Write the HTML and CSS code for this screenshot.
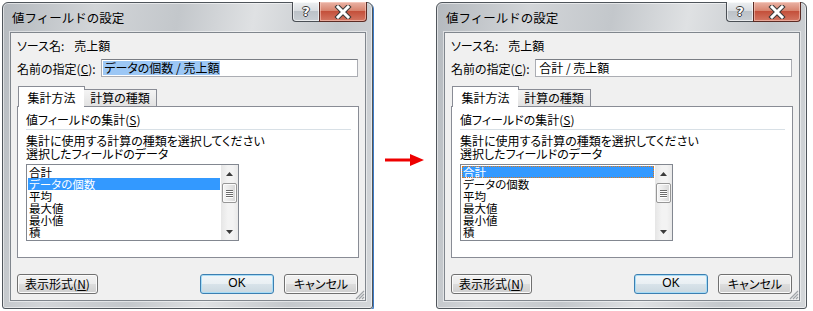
FILE: index.html
```html
<!DOCTYPE html>
<html lang="ja">
<head>
<meta charset="utf-8">
<title>値フィールドの設定</title>
<link rel="stylesheet" href="styles.css">
</head>
<body>
<div class="page">
  <div class="dialog left">
    <div class="titlebar">
      <span class="title">値フィールドの設定</span>
      <div class="caption">
        <span class="cap-help">?</span>
        <span class="cap-close"><svg width="20" height="14" viewBox="0 0 20 14"><path d="M5 2 L15 12 M15 2 L5 12" stroke="#3a3a3a" stroke-width="5" stroke-linecap="square"/><path d="M5 2 L15 12 M15 2 L5 12" stroke="#ffffff" stroke-width="3" stroke-linecap="square"/></svg></span>
      </div>
    </div>
    <div class="client">
      <div class="source">ソース名:<span class="val">売上額</span></div>
      <div class="namerow">
        <span class="label">名前の指定(<u>C</u>):</span>
        <div class="input"><span class="sel">データの個数 / 売上額</span></div>
      </div>
      <div class="tabs">
        <div class="tab active">集計方法</div>
        <div class="tab">計算の種類</div>
      </div>
      <div class="panel">
        <div class="group">値フィールドの集計(<u>S</u>)</div>
        <div class="sep"></div>
        <div class="desc">集計に使用する計算の種類を選択してください<br>選択したフィールドのデータ</div>
        <div class="listbox">
          <ul class="items">
            <li>合計</li>
            <li class="selected">データの個数</li>
            <li>平均</li>
            <li>最大値</li>
            <li>最小値</li>
            <li>積</li>
          </ul>
          <div class="scrollbar">
            <div class="sb-btn"><svg width="7" height="4" viewBox="0 0 7 4"><path d="M0 4 L3.5 0 L7 4Z" fill="#3b3b3b"/></svg></div>
            <div class="thumb"><span></span><span></span><span></span><span></span></div>
            <div class="sb-fill"></div>
            <div class="sb-btn"><svg width="7" height="4" viewBox="0 0 7 4"><path d="M0 0 L3.5 4 L7 0Z" fill="#3b3b3b"/></svg></div>
          </div>
        </div>
      </div>
      <div class="buttons">
        <div class="btn fmt">表示形式(<u>N</u>)</div>
        <div class="btn ok">OK</div>
        <div class="btn cancel">キャンセル</div>
      </div>
      <svg class="grip" width="11" height="11" viewBox="0 0 11 11"><path d="M10 2 L2 10 M10 5 L5 10 M10 8 L8 10" stroke="#a0a4a8" stroke-width="1.2"/></svg>
    </div>
  </div>

  <div class="arrow-gap">
    <svg class="arrow" width="40" height="12" viewBox="0 0 40 12"><path d="M0 6 H27" stroke="#ee0000" stroke-width="3"/><path d="M25 0 L39 6 L25 12 Z" fill="#ee0000"/></svg>
  </div>

  <div class="dialog right">
    <div class="titlebar">
      <span class="title">値フィールドの設定</span>
      <div class="caption">
        <span class="cap-help">?</span>
        <span class="cap-close"><svg width="20" height="14" viewBox="0 0 20 14"><path d="M5 2 L15 12 M15 2 L5 12" stroke="#3a3a3a" stroke-width="5" stroke-linecap="square"/><path d="M5 2 L15 12 M15 2 L5 12" stroke="#ffffff" stroke-width="3" stroke-linecap="square"/></svg></span>
      </div>
    </div>
    <div class="client">
      <div class="source">ソース名:<span class="val">売上額</span></div>
      <div class="namerow">
        <span class="label">名前の指定(<u>C</u>):</span>
        <div class="input"><span class="plain">合計 / 売上額</span></div>
      </div>
      <div class="tabs">
        <div class="tab active">集計方法</div>
        <div class="tab">計算の種類</div>
      </div>
      <div class="panel">
        <div class="group">値フィールドの集計(<u>S</u>)</div>
        <div class="sep"></div>
        <div class="desc">集計に使用する計算の種類を選択してください<br>選択したフィールドのデータ</div>
        <div class="listbox">
          <ul class="items">
            <li class="selected focus">合計</li>
            <li>データの個数</li>
            <li>平均</li>
            <li>最大値</li>
            <li>最小値</li>
            <li>積</li>
          </ul>
          <div class="scrollbar">
            <div class="sb-btn"><svg width="7" height="4" viewBox="0 0 7 4"><path d="M0 4 L3.5 0 L7 4Z" fill="#3b3b3b"/></svg></div>
            <div class="thumb"><span></span><span></span><span></span><span></span></div>
            <div class="sb-fill"></div>
            <div class="sb-btn"><svg width="7" height="4" viewBox="0 0 7 4"><path d="M0 0 L3.5 4 L7 0Z" fill="#3b3b3b"/></svg></div>
          </div>
        </div>
      </div>
      <div class="buttons">
        <div class="btn fmt">表示形式(<u>N</u>)</div>
        <div class="btn ok">OK</div>
        <div class="btn cancel">キャンセル</div>
      </div>
      <svg class="grip" width="11" height="11" viewBox="0 0 11 11"><path d="M10 2 L2 10 M10 5 L5 10 M10 8 L8 10" stroke="#a0a4a8" stroke-width="1.2"/></svg>
    </div>
  </div>
</div>
</body>
</html>
```

FILE: styles.css
```css
html, body {
  margin: 0;
  padding: 0;
  background: #ffffff;
}

body {
  font-family: "Noto Sans CJK JP", "Noto Sans", sans-serif;
  font-size: 12px;
  color: #000;
  font-feature-settings: "palt";
}

.page {
  display: flex;
  align-items: flex-start;
  padding: 2px 0 0 2px;
}

.dialog {
  width: 371px;
  height: 307px;
  box-sizing: border-box;
  border: 1px solid #4f555b;
  border-radius: 6px 6px 3px 3px;
  padding: 0 6px 7px 7px;
  display: flex;
  flex-direction: column;
  background:
    linear-gradient(100deg, #b4b9be 0%, #d2d5d8 22%, #c3c7cb 42%, #dfe1e3 60%, #c4c8cc 80%, #d4d7da 100%);
  box-shadow: inset 0 0 0 1px rgba(255, 255, 255, 0.55);
}

.dialog.left {
  box-shadow: inset 0 0 0 1px rgba(255, 255, 255, 0.55), 1px 1px 0 #3d7cc9;
}

.titlebar {
  height: 29px;
  display: flex;
  justify-content: space-between;
  align-items: flex-start;
}

.title {
  margin: 8px 0 0 2px;
  line-height: 14px;
  font-size: 12.5px;
  font-feature-settings: normal;
  color: #000;
}

.caption {
  display: flex;
  margin-right: -1px;
  margin-top: -1px;
}

.cap-help,
.cap-close {
  height: 20px;
  box-sizing: border-box;
  display: flex;
  align-items: center;
  justify-content: center;
  border: 1px solid #4a4f55;
  border-top: none;
}

.cap-help {
  width: 27px;
  border-right: none;
  border-radius: 0 0 0 4px;
  background: linear-gradient(#eef0f2 0%, #d9dde1 45%, #bcc2c8 50%, #c9ced3 100%);
  box-shadow: inset 0 0 0 1px rgba(255, 255, 255, 0.6);
  color: #fff;
  font-family: "DejaVu Sans", sans-serif;
  font-weight: bold;
  font-size: 13px;
  line-height: 18px;
  text-shadow: 1px 0 0 #3a3a3a, -1px 0 0 #3a3a3a, 0 1px 0 #3a3a3a, 0 -1px 0 #3a3a3a;
}

.cap-close {
  width: 48px;
  border-radius: 0 0 4px 0;
  border-color: #5b2b24;
  background: linear-gradient(#eab3a6 0%, #d8846f 45%, #c4503b 50%, #d47763 100%);
  box-shadow: inset 0 0 0 1px rgba(255, 220, 210, 0.5);
}

.client {
  position: relative;
  flex: 1;
  box-sizing: border-box;
  border: 1px solid #80868d;
  background: #f0f0f0;
  padding: 6px 7px 0 6px;
  box-shadow: 0 0 0 1px rgba(255, 255, 255, 0.5);
  display: flex;
  flex-direction: column;
}

.source {
  height: 13px;
  line-height: 13px;
}

.source .val {
  margin-left: 10px;
}

.namerow {
  margin-top: 7px;
  display: flex;
  align-items: center;
  height: 18px;
}

.label {
  width: 85px;
  line-height: 13px;
}

.input {
  width: 259px;
  height: 18px;
  box-sizing: border-box;
  border: 1px solid #abadb3;
  border-top-color: #7a7d84;
  background: #fff;
  padding-left: 1px;
  line-height: 16px;
  display: flex;
  align-items: center;
}

.input .sel {
  background: #9cc7f5;
  line-height: 14px;
  padding: 0 1px;
}

.input .plain {
  padding-left: 2px;
}

.tabs {
  margin-top: 9px;
  display: flex;
  align-items: flex-end;
  height: 21px;
  position: relative;
  z-index: 1;
}

.tab {
  box-sizing: border-box;
  border: 1px solid #898c95;
  border-bottom: none;
  text-align: center;
  line-height: 15px;
}

.tab.active {
  width: 67px;
  height: 21px;
  margin-left: 1px;
  background: #ffffff;
  padding-top: 3px;
}

.tab:not(.active) {
  width: 73px;
  height: 17px;
  margin-left: -1px;
  margin-bottom: 1px;
  background: linear-gradient(#f4f4f4, #e2e2e2);
  border-left: none;
  padding-top: 0;
}

.panel {
  margin-top: -1px;
  width: 342px;
  height: 152px;
  box-sizing: border-box;
  border: 1px solid #898c95;
  background: #ffffff;
  padding: 6px 0 0 8px;
}

.group {
  line-height: 13px;
}

.sep {
  margin-top: 3px;
  width: 325px;
  height: 1px;
  background: #d8e0e6;
}

.desc {
  margin-top: 4px;
  line-height: 13px;
}

.listbox {
  margin-top: 4px;
  width: 213px;
  height: 77px;
  box-sizing: border-box;
  border: 1px solid #828790;
  display: flex;
  background: #fff;
}

.items {
  flex: 1;
  margin: 0;
  padding: 1px 1px 0 1px;
  list-style: none;
}

.items li {
  height: 12px;
  line-height: 12px;
  font-size: 11.5px;
  padding-left: 1px;
  box-sizing: border-box;
}

.items li.selected {
  background: #3399ff;
  color: #fff;
}

.items li.focus {
  outline: 1px dotted #d9781f;
  outline-offset: -1px;
}

.scrollbar {
  width: 17px;
  display: flex;
  flex-direction: column;
  align-items: center;
  background: linear-gradient(to right, #e6e6e6, #f3f3f3 40%, #f3f3f3 70%, #e9e9e9);
}

.sb-btn {
  width: 17px;
  height: 17px;
  display: flex;
  align-items: center;
  justify-content: center;
}

.thumb {
  margin-top: 1px;
  width: 15px;
  height: 20px;
  box-sizing: border-box;
  border: 1px solid #979797;
  border-radius: 2px;
  background: linear-gradient(to right, #f6f6f6, #e8e8e8 50%, #d6d6d6);
  box-shadow: inset 0 0 0 1px #fbfbfb;
  display: flex;
  flex-direction: column;
  align-items: center;
  justify-content: center;
  gap: 1px;
}

.thumb span {
  width: 7px;
  height: 1px;
  background: #6b6b6b;
  box-shadow: 0 1px 0 #ffffff;
}

.sb-fill {
  flex: 1;
}

.buttons {
  margin-top: 16px;
  display: flex;
  height: 20px;
}

.btn {
  height: 20px;
  box-sizing: border-box;
  border: 1px solid #707070;
  border-radius: 3px;
  background: linear-gradient(#f2f2f2 0%, #ebebeb 50%, #dddddd 50%, #cfcfcf 100%);
  box-shadow: inset 0 0 0 1px #fbfbfb;
  line-height: 17px;
  text-align: center;
}

.btn.fmt {
  width: 81px;
}

.btn.ok {
  width: 74px;
  margin-left: auto;
  border-color: #3c7fb1;
  box-shadow: inset 0 0 0 1px #a7dcf6;
  background: linear-gradient(#f1f6f9 0%, #e9eff3 50%, #d8e3ea 50%, #cbd8e0 100%);
  font-family: "Liberation Sans", sans-serif;
}

.btn.cancel {
  width: 74px;
  margin-left: 10px;
}

.grip {
  position: absolute;
  right: 0;
  bottom: 0;
}

.arrow-gap {
  width: 63px;
  padding-top: 152px;
  padding-left: 12px;
  box-sizing: border-box;
}

.arrow {
  display: block;
}
```
